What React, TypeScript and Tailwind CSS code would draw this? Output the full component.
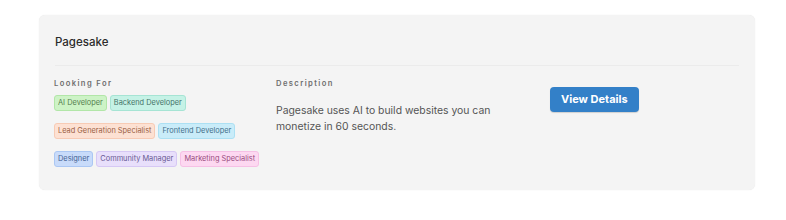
import React from 'react';

type Tag = { label: string; cls: string };

const rows: Tag[][] = [
  [
    { label: 'AI Developer', cls: 'bg-[#cdf3c6] border-[#b2e6a8] text-[#55804e]' },
    { label: 'Backend Developer', cls: 'bg-[#c5f2e6] border-[#a6e4d4] text-[#457469]' },
  ],
  [
    { label: 'Lead Generation Specialist', cls: 'bg-[#fde1d3] border-[#f7cbb5] text-[#9a5f44]' },
    { label: 'Frontend Developer', cls: 'bg-[#c9ecf9] border-[#ace0f3] text-[#436f8a]' },
  ],
  [
    { label: 'Designer', cls: 'bg-[#c8dbfa] border-[#abc7f3] text-[#456293]' },
    { label: 'Community Manager', cls: 'bg-[#e8dffb] border-[#d6c8f4] text-[#695a94]' },
    { label: 'Marketing Specialist', cls: 'bg-[#fdd8f1] border-[#f6c0e5] text-[#994d80]' },
  ],
];

const App: React.FC = () => {
  return (
    <div className="min-h-screen bg-white pt-[15px] pl-[39px]" style={{ fontFamily: 'Inter, "Noto Sans", sans-serif' }}>
      <div className="w-[716px] h-[175px] rounded-[6px] bg-[#f4f4f4] shadow-[0_0_1px_rgba(0,0,0,0.12)]">
        {/* Header */}
        <div className="px-[16px] pt-[17px] pb-[13px]">
          <h2 className="text-[11.5px] leading-[20px] font-medium text-[#2b2b2b]">Pagesake</h2>
        </div>
        <div className="mx-[16px] border-t border-[#ebebeb]"></div>

        {/* Body */}
        <div className="flex px-[15px] pt-[12px]">
          <div className="w-[222px]">
            <div className="text-[7.6px] leading-[12px] font-semibold tracking-[1.4px] text-[#6e6e6e]">Looking For</div>
            <div className="mt-[5px] flex flex-col gap-[12px]">
              {rows.map((row, i) => (
                <div key={i} className="flex gap-[3px]">
                  {row.map((t) => (
                    <span
                      key={t.label}
                      className={`h-[16px] px-[3px] inline-flex items-center rounded-[3px] border text-[7.4px] leading-none ${t.cls}`}
                    >
                      {t.label}
                    </span>
                  ))}
                </div>
              ))}
            </div>
          </div>

          <div className="w-[274px] pr-[24px]">
            <div className="text-[7.6px] leading-[12px] font-semibold tracking-[1.4px] text-[#6e6e6e]">Description</div>
            <p className="mt-[13px] text-[10.4px] leading-[16px] text-[#555]">
              Pagesake uses AI to build websites you can monetize in 60 seconds.
            </p>
          </div>

          <div className="pt-[7px]">
            <button className="h-[25px] px-[11px] rounded-[4px] bg-[#3380c8] text-white text-[11px] font-bold shadow-[0_1px_1px_rgba(0,0,0,0.15)]">
              View Details
            </button>
          </div>
        </div>
      </div>
    </div>
  );
};

export default App;
